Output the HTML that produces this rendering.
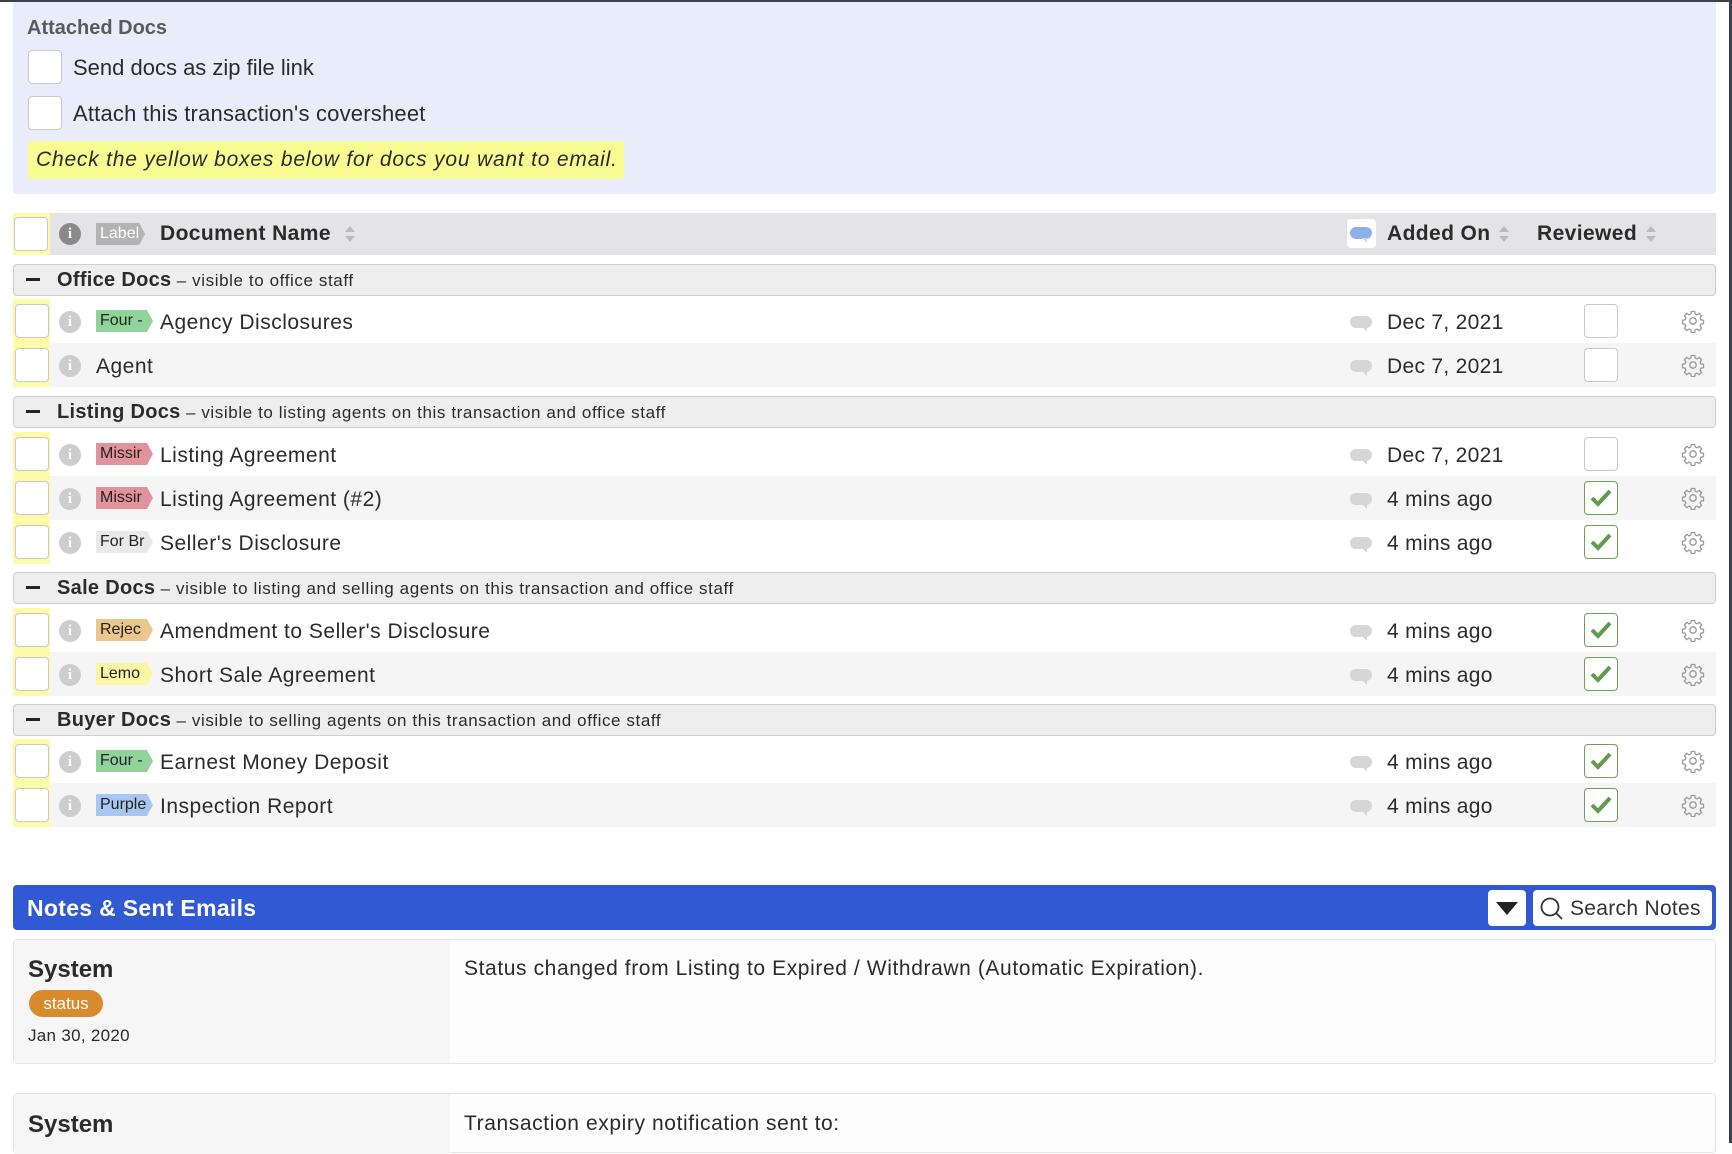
<!DOCTYPE html>
<html><head><meta charset="utf-8">
<style>
*{box-sizing:border-box;margin:0;padding:0}
body{width:1732px;height:1143px;overflow:hidden;background:#fff;font-family:"Liberation Sans",sans-serif;color:#2b2b2b;position:relative}
.a{position:absolute}
.cb{position:absolute;background:#fff;border:1px solid #c9c9c9;border-radius:4px}
.info{position:absolute;width:22px;height:22px;border-radius:50%;background:#cdcdcd;color:#fff;font:bold 15px/22px "Liberation Serif",serif;text-align:center}
.lbl{position:absolute;height:22px;font-size:16px;line-height:22px;padding:0 6px 0 4px;color:#222;clip-path:polygon(0 0,calc(100% - 6px) 0,100% 50%,calc(100% - 6px) 100%,0 100%)}
.name{position:absolute;font-size:21px;letter-spacing:0.5px}
.bub{position:absolute;width:22px;height:12px;border-radius:6px;background:#d6d6d6}
.bub:after{content:"";position:absolute;left:12px;bottom:-4px;border-left:5px solid transparent;border-top:5px solid #d6d6d6}
.date{position:absolute;font-size:21px;letter-spacing:0.3px}
.grp{position:absolute;left:13px;width:1703px;height:32px;background:#eeeeee;border:1px solid #cfcfcf;border-radius:4px;font-size:17px;line-height:30px;padding-left:12px;letter-spacing:0.6px}
.grp b{font-size:20px;margin-left:17px;letter-spacing:0.3px}
.grp i{display:inline-block;width:14px;height:3px;background:#222;vertical-align:middle;position:relative;top:-2px}
.row{position:absolute;left:50px;width:1666px;height:44px}
.ys{position:absolute;left:13px;width:37px;background:#fdfba8}
.rv{position:absolute;left:1584px;width:34px;height:34px;background:#fff;border:1px solid #c9c9c9;border-radius:4px}
.rv.on{border-color:#6aa35a}
.gear{position:absolute;left:1681px}
.sort{position:absolute;width:10px;height:18px}
</style></head><body>
<div class="a" style="left:0;top:0;width:1732px;height:2px;background:#3a3f4a"></div>
<div class="a" style="left:1729px;top:0;width:3px;height:1143px;background:#3a3f4a"></div>

<div class="a" style="left:13px;top:2px;width:1703px;height:192px;background:#e9ecfb;border-radius:0 0 4px 4px"></div>
<div class="a" style="left:27px;top:17px;font-size:20px;font-weight:bold;color:#5a5a5a">Attached Docs</div>
<div class="cb" style="left:28px;top:50px;width:34px;height:34px"></div>
<div class="a" style="left:73px;top:55px;font-size:22px">Send docs as zip file link</div>
<div class="cb" style="left:28px;top:96px;width:34px;height:34px"></div>
<div class="a" style="left:73px;top:101px;font-size:22px;letter-spacing:0.2px">Attach this transaction's coversheet</div>
<div class="a" style="left:28px;top:141px;width:596px;height:38px;background:#fbfb94;border-radius:3px;font-size:21px;font-style:italic;line-height:38px;padding-left:8px;letter-spacing:0.8px">Check the yellow boxes below for docs you want to email.</div>

<div class="a" style="left:13px;top:213px;width:1703px;height:42px;background:#e4e4e6"></div>
<div class="ys" style="top:213px;height:42px"></div>
<div class="cb" style="left:14px;top:217px;width:34px;height:34px"></div>
<div class="info" style="left:59px;top:223px;background:#8a8a8a">i</div>
<div class="lbl" style="left:96px;top:223px;background:#b3b3b3;color:#fff">Label</div>
<div class="a" style="left:160px;top:222px;font-size:21px;font-weight:bold;letter-spacing:0.4px">Document Name</div>
<svg class="sort" style="left:345px;top:225px" viewBox="0 0 10 18"><path d="M5 1L10 7H0z" fill="#bbb"/><path d="M5 17L10 11H0z" fill="#bbb"/></svg>
<div class="a" style="left:1347px;top:219px;width:29px;height:29px;background:#fff;border-radius:4px"></div>
<div class="bub" style="left:1350px;top:227px;background:#8fb0e8"></div>
<div class="a" style="left:1387px;top:222px;font-size:21px;font-weight:bold;letter-spacing:0.4px">Added On</div>
<svg class="sort" style="left:1499px;top:225px" viewBox="0 0 10 18"><path d="M5 1L10 7H0z" fill="#bbb"/><path d="M5 17L10 11H0z" fill="#bbb"/></svg>
<div class="a" style="left:1537px;top:222px;font-size:21px;font-weight:bold;letter-spacing:0.4px">Reviewed</div>
<svg class="sort" style="left:1646px;top:225px" viewBox="0 0 10 18"><path d="M5 1L10 7H0z" fill="#bbb"/><path d="M5 17L10 11H0z" fill="#bbb"/></svg>

<div class="grp" style="top:264px"><i></i><b>Office Docs</b> – visible to office staff</div>
<div class="grp" style="top:396px"><i></i><b>Listing Docs</b> – visible to listing agents on this transaction and office staff</div>
<div class="grp" style="top:572px"><i></i><b>Sale Docs</b> – visible to listing and selling agents on this transaction and office staff</div>
<div class="grp" style="top:704px"><i></i><b>Buyer Docs</b> – visible to selling agents on this transaction and office staff</div>

<div class="ys" style="top:299px;height:88px"></div>
<div class="ys" style="top:432px;height:132px"></div>
<div class="ys" style="top:608px;height:88px"></div>
<div class="ys" style="top:739px;height:88px"></div>

<div id="rows"></div>
<script>
var rows=[
[299,0,"Four -","#90d49c","Agency Disclosures","Dec 7, 2021",0],
[343,1,null,null,"Agent","Dec 7, 2021",0],
[432,0,"Missir","#e2929a","Listing Agreement","Dec 7, 2021",0],
[476,1,"Missir","#e2929a","Listing Agreement (#2)","4 mins ago",1],
[520,0,"For Br","#e9e9e9","Seller's Disclosure","4 mins ago",1],
[608,0,"Rejec","#ebc78e","Amendment to Seller's Disclosure","4 mins ago",1],
[652,1,"Lemo","#fbf5a6","Short Sale Agreement","4 mins ago",1],
[739,0,"Four -","#90d49c","Earnest Money Deposit","4 mins ago",1],
[783,1,"Purple","#a9c6f0","Inspection Report","4 mins ago",1]];
var h="";
var gear='<svg width="24" height="24" viewBox="0 0 24 24" fill="none" stroke="#9a9a9a" stroke-width="1.3"><path d="M10.3 2.5h3.4l.5 2.6 1.8.8 2.2-1.5 2.4 2.4-1.5 2.2.8 1.8 2.6.5v3.4l-2.6.5-.8 1.8 1.5 2.2-2.4 2.4-2.2-1.5-1.8.8-.5 2.6h-3.4l-.5-2.6-1.8-.8-2.2 1.5-2.4-2.4 1.5-2.2-.8-1.8-2.6-.5v-3.4l2.6-.5.8-1.8-1.5-2.2 2.4-2.4 2.2 1.5 1.8-.8z"/><circle cx="12" cy="12" r="3.2"/></svg>';
rows.forEach(function(r){
var t=r[0];
if(r[1])h+='<div class="row" style="top:'+t+'px;background:#f5f5f5"></div>';
h+='<div class="cb" style="left:15px;top:'+(t+5)+'px;width:34px;height:34px"></div>';
h+='<div class="info" style="left:59px;top:'+(t+12)+'px">i</div>';
var nx=96;
if(r[2]){h+='<div class="lbl" style="left:96px;top:'+(t+11)+'px;width:57px;overflow:hidden;white-space:nowrap;background:'+r[3]+'">'+r[2]+'</div>';nx=160;}
h+='<div class="name" style="left:'+nx+'px;top:'+(t+12)+'px">'+r[4]+'</div>';
h+='<div class="bub" style="left:1350px;top:'+(t+17)+'px"></div>';
h+='<div class="date" style="left:1387px;top:'+(t+12)+'px">'+r[5]+'</div>';
h+='<div class="rv'+(r[6]?' on':'')+'" style="top:'+(t+5)+'px">'+(r[6]?'<svg width="32" height="32" viewBox="0 0 32 32"><path d="M7 16l6 6 12-13" fill="none" stroke="#5f9c4d" stroke-width="4"/></svg>':'')+'</div>';
h+='<div class="gear" style="top:'+(t+10)+'px">'+gear+'</div>';
});
document.getElementById("rows").innerHTML=h;
</script>

<div class="a" style="left:13px;top:885px;width:1703px;height:45px;background:#3059d3;border-radius:4px"></div>
<div class="a" style="left:27px;top:895px;font-size:23px;font-weight:bold;color:#fff;letter-spacing:0.3px">Notes &amp; Sent Emails</div>
<div class="a" style="left:1488px;top:890px;width:38px;height:36px;background:#fff;border-radius:4px"></div>
<svg class="a" style="left:1496px;top:902px" width="22" height="13" viewBox="0 0 22 13"><path d="M0 0H22L11 13z" fill="#222"/></svg>
<div class="a" style="left:1533px;top:890px;width:179px;height:36px;background:#fff;border-radius:4px"></div>
<svg class="a" style="left:1539px;top:896px" width="26" height="26" viewBox="0 0 26 26" fill="none" stroke="#333" stroke-width="1.8"><circle cx="11" cy="11" r="8.5"/><path d="M17 17l6 6"/></svg>
<div class="a" style="left:1570px;top:897px;font-size:21px;color:#333;letter-spacing:0.3px">Search Notes</div>

<div class="a" style="left:13px;top:939px;width:1703px;height:125px;border:1px solid #e6e6e6;border-radius:4px;background:#fdfdfd"></div>
<div class="a" style="left:14px;top:940px;width:436px;height:123px;background:#f6f6f6"></div>
<div class="a" style="left:28px;top:956px;font-size:24px;font-weight:bold">System</div>
<div class="a" style="left:29px;top:990px;width:74px;height:27px;background:#d98a2c;border-radius:14px;color:#fff;font-size:17px;line-height:27px;text-align:center">status</div>
<div class="a" style="left:28px;top:1026px;font-size:17px;letter-spacing:0.3px">Jan 30, 2020</div>
<div class="a" style="left:464px;top:957px;font-size:21px;letter-spacing:0.6px">Status changed from Listing to Expired / Withdrawn (Automatic Expiration).</div>

<div class="a" style="left:13px;top:1093px;width:1703px;height:60px;border:1px solid #e6e6e6;border-radius:4px;background:#fdfdfd"></div>
<div class="a" style="left:14px;top:1094px;width:436px;height:60px;background:#f6f6f6"></div>
<div class="a" style="left:28px;top:1111px;font-size:24px;font-weight:bold">System</div>
<div class="a" style="left:464px;top:1112px;font-size:21px;letter-spacing:0.6px">Transaction expiry notification sent to:</div>
</body></html>
